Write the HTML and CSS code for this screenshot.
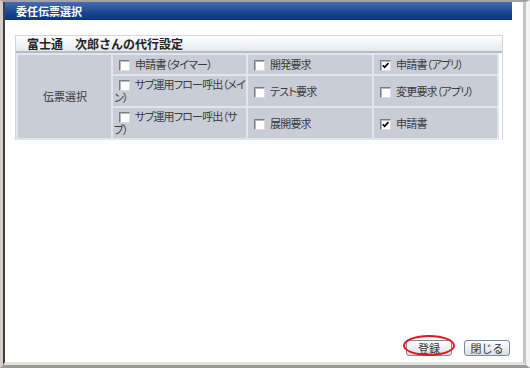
FILE: index.html
```html
<!DOCTYPE html>
<html lang="ja">
<head>
<meta charset="utf-8">
<title>委任伝票選択</title>
<link rel="stylesheet" href="styles.css">
</head>
<body>
<div class="window">
  <div class="inner">
    <div class="titlebar">委任伝票選択</div>
    <div class="panel">
      <div class="panel-head">富士通　次郎さんの代行設定</div>
      <table class="grid">
        <colgroup><col class="c1"><col class="c2"><col class="c3"><col class="c4"></colgroup>
        <tr class="r1">
          <th rowspan="3">伝票選択</th>
          <td><label><input type="checkbox">申請書（タイマー）</label></td>
          <td><label><input type="checkbox">開発要求</label></td>
          <td><label><input type="checkbox" checked>申請書（アプリ）</label></td>
        </tr>
        <tr class="r2">
          <td><label><input type="checkbox">サブ運用フロー呼出（メイン）</label></td>
          <td><label><input type="checkbox">テスト要求</label></td>
          <td><label><input type="checkbox">変更要求（アプリ）</label></td>
        </tr>
        <tr class="r2">
          <td><label><input type="checkbox">サブ運用フロー呼出（サブ）</label></td>
          <td><label><input type="checkbox">展開要求</label></td>
          <td><label><input type="checkbox" checked>申請書</label></td>
        </tr>
      </table>
    </div>
    <div class="actions">
      <span class="btn-wrap"><button class="btn" type="button">登録</button><span class="ring"></span></span>
      <button class="btn" type="button">閉じる</button>
    </div>
  </div>
</div>
</body>
</html>
```
FILE: styles.css
```css
html, body {
  margin: 0;
  padding: 0;
  background: #ffffff;
}
body {
  font-family: "Noto Sans CJK JP", "Noto Sans", sans-serif;
  color: #333333;
}
.window {
  width: 530px;
  height: 368px;
  box-sizing: border-box;
  border-top: 2px solid #a4a4a4;
  border-left: 3px solid #d4d0c8;
  border-right: 4px solid #f4f4f4;
  border-bottom: 3px solid #9a9a9a;
  display: flex;
}
.inner {
  flex: 1;
  display: flex;
  flex-direction: column;
  border-left: 2px solid #404040;
  border-right: 3px solid #c4c4c4;
  border-bottom: 3px solid #e6e3de;
  background: #ffffff;
}
.titlebar {
  height: 18px;
  margin-right: 11px;
  padding-left: 11px;
  background: linear-gradient(#4a6db0, #1c4890 55%, #0a3681);
  color: #ffffff;
  font-size: 11px;
  font-weight: bold;
  line-height: 18px;
}
.panel {
  margin: 15px 0 0 10px;
  width: 488px;
  box-sizing: border-box;
  border: 1px solid #d4d6da;
  border-bottom: none;
}
.panel-head {
  height: 15px;
  padding-left: 11px;
  background: linear-gradient(#ffffff, #e6e8ec);
  border-bottom: 2px solid #b6bcc7;
  font-size: 12px;
  font-weight: bold;
  line-height: 16px;
  color: #222222;
}
.grid {
  width: 483px;
  table-layout: fixed;
  border-spacing: 2px;
  background: #e2e5eb;
  font-size: 11px;
  line-height: 13px;
  color: #3a3a3a;
}
.c1 { width: 93px; }
.c2 { width: 133px; }
.c3 { width: 124px; }
.grid th,
.grid td {
  background: #c9cdd8;
  padding: 2px 0 2px 1px;
  vertical-align: middle;
}
.grid th {
  font-weight: normal;
  text-align: center;
}
.grid td {
  font-feature-settings: "palt";
  letter-spacing: -0.8px;
}
.r1 { height: 19px; }
.r2 { height: 30px; }
.grid input {
  -webkit-appearance: none;
  appearance: none;
  box-sizing: border-box;
  width: 11px;
  height: 11px;
  margin: 0 5px 0 5px;
  vertical-align: -2px;
  background: #ffffff;
  border: 1px solid;
  border-color: #7c7c7c #dcdcdc #dcdcdc #7c7c7c;
  box-shadow: inset 1px 1px 0 #b8b8b8;
}
.grid input:checked {
  background: #ffffff url("data:image/svg+xml,%3Csvg xmlns='http://www.w3.org/2000/svg' width='9' height='9'%3E%3Cpath d='M1.8 4.2 L3.6 6.3 L7.4 2.2' fill='none' stroke='%23000' stroke-width='1.7'/%3E%3C/svg%3E") center / 9px 9px no-repeat;
}
.actions {
  margin-top: auto;
  margin-bottom: 6px;
  padding-right: 13px;
  display: flex;
  justify-content: flex-end;
  gap: 12px;
}
.btn-wrap {
  position: relative;
  display: flex;
}
.btn {
  width: 46px;
  height: 16px;
  padding: 0;
  border: 1px solid #7f889b;
  border-radius: 3px;
  background: linear-gradient(#ffffff, #e9ecf1 60%, #d7dbe3);
  font-family: "Noto Sans CJK JP", sans-serif;
  font-size: 11px;
  line-height: 14px;
  color: #333333;
}
.ring {
  position: absolute;
  left: -3px;
  top: -5px;
  width: 52px;
  height: 21px;
  box-sizing: border-box;
  border: 2px solid #e8141c;
  border-radius: 50%;
  pointer-events: none;
}
```
